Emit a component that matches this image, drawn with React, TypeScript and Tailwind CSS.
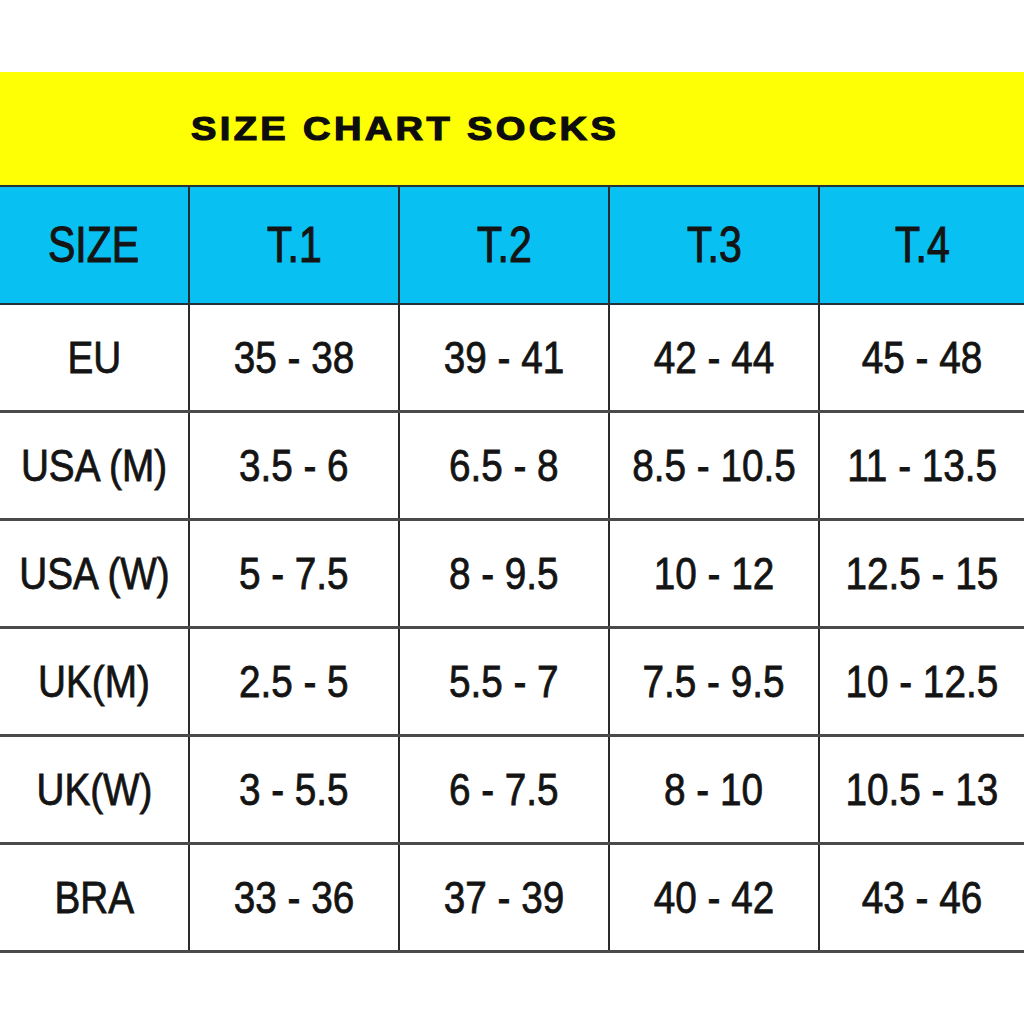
import React from 'react';

const columns = ['T.1', 'T.2', 'T.3', 'T.4'];

const rows: { label: string; values: string[] }[] = [
  { label: 'EU', values: ['35 - 38', '39 - 41', '42 - 44', '45 - 48'] },
  { label: 'USA (M)', values: ['3.5 - 6', '6.5 - 8', '8.5 - 10.5', '11 - 13.5'] },
  { label: 'USA (W)', values: ['5 - 7.5', '8 - 9.5', '10 - 12', '12.5 - 15'] },
  { label: 'UK(M)', values: ['2.5 - 5', '5.5 - 7', '7.5 - 9.5', '10 - 12.5'] },
  { label: 'UK(W)', values: ['3 - 5.5', '6 - 7.5', '8 - 10', '10.5 - 13'] },
  { label: 'BRA', values: ['33 - 36', '37 - 39', '40 - 42', '43 - 46'] },
];

const gridCols = 'grid grid-cols-[190px_210px_210px_210px_1fr]';

function Cell({ children, last, header }: { children: string; last?: boolean; header?: boolean }) {
  return (
    <div
      className={`flex items-center justify-center ${last ? '' : 'border-r-2 border-[#2b2b2b]'}`}
    >
      <span
        className={`inline-block whitespace-nowrap text-[#141414] ${
          header
            ? 'scale-x-[0.82] text-[50px] [-webkit-text-stroke:1.1px_#141414]'
            : 'scale-x-[0.86] text-[45px] [-webkit-text-stroke:0.8px_#141414]'
        }`}
      >
        {children}
      </span>
    </div>
  );
}

export default function App() {
  return (
    <div className="h-[1024px] w-[1024px] overflow-hidden bg-white pt-[72px] font-['Liberation_Sans',Arial,sans-serif]">
      <div className="flex h-[113px] items-center bg-[#fefe05] pl-[191px]">
        <h1 className="origin-left scale-x-[1.12] text-[34px] font-bold tracking-[3px] text-[#0d0d0d] [-webkit-text-stroke:1.2px_#0d0d0d]">
          SIZE CHART SOCKS
        </h1>
      </div>

      <div className={`${gridCols} h-[120px] border-y-2 border-[#24323a] bg-[#08c1f2]`}>
        <Cell header>SIZE</Cell>
        {columns.map((c, i) => (
          <Cell key={c} header last={i === columns.length - 1}>
            {c}
          </Cell>
        ))}
      </div>

      {rows.map((row) => (
        <div key={row.label} className={`${gridCols} h-[108px] border-b-[3px] border-[#4a4a4a]`}>
          <Cell>{row.label}</Cell>
          {row.values.map((v, i) => (
            <Cell key={i} last={i === row.values.length - 1}>
              {v}
            </Cell>
          ))}
        </div>
      ))}
    </div>
  );
}
